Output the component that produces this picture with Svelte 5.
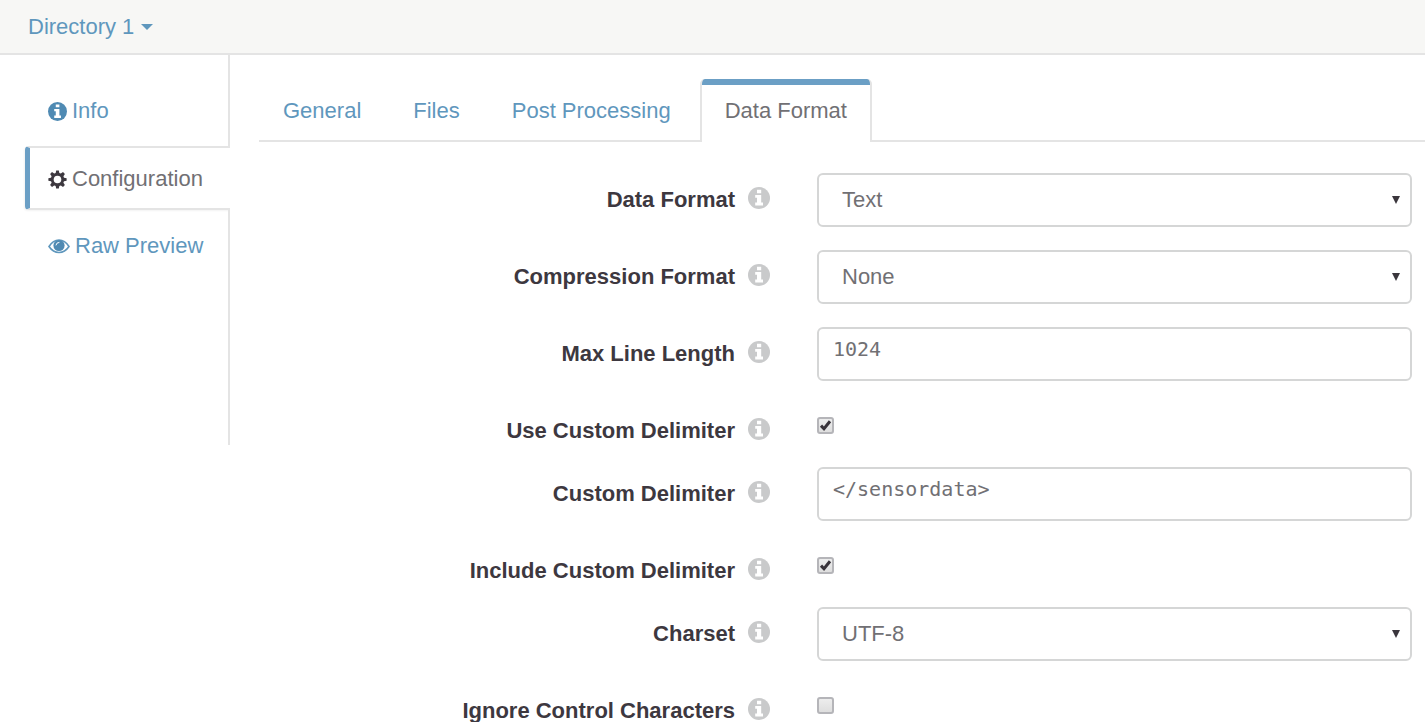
<script lang="ts">
  type Field = {
    id: string;
    label: string;
    kind: 'select' | 'text' | 'check';
    value?: string;
    options?: string[];
    checked?: boolean;
  };

  const tabs = ['General', 'Files', 'Post Processing', 'Data Format'];
  let activeTab = $state('Data Format');

  let fields = $state<Field[]>([
    { id: 'data-format', label: 'Data Format', kind: 'select', value: 'Text', options: ['Text'] },
    { id: 'compression', label: 'Compression Format', kind: 'select', value: 'None', options: ['None'] },
    { id: 'max-line', label: 'Max Line Length', kind: 'text', value: '1024' },
    { id: 'use-delimiter', label: 'Use Custom Delimiter', kind: 'check', checked: true },
    { id: 'delimiter', label: 'Custom Delimiter', kind: 'text', value: '</sensordata>' },
    { id: 'include-delimiter', label: 'Include Custom Delimiter', kind: 'check', checked: true },
    { id: 'charset', label: 'Charset', kind: 'select', value: 'UTF-8', options: ['UTF-8'] },
    { id: 'ignore-control', label: 'Ignore Control Characters', kind: 'check', checked: false }
  ]);
</script>

{#snippet infoIcon()}
  <svg class="info" viewBox="0 0 22 22" aria-hidden="true">
    <circle cx="11" cy="11" r="11" fill="currentColor" />
    <path d="M9 2.800h4.200v3.400H9zM7.200 8h6v7.600H15v2.800H7.200v-2.800H9v-4.800H7.200z" fill="#fff" />
  </svg>
{/snippet}

<div class="app">
  <header>
    <button class="crumb" type="button">
      Directory 1
      <svg width="12" height="6" viewBox="0 0 12 6" aria-hidden="true"><path d="M0 0h12L6 6z" fill="currentColor" /></svg>
    </button>
  </header>

  <div class="body">
    <nav class="side">
      <a href="#info">{@render infoIcon()}Info</a>
      <a href="#configuration" class="active">
        <svg class="gear" viewBox="0 0 20 20" aria-hidden="true">
          <g fill="currentColor">
            {#each [0, 45, 90, 135] as angle}
              <path d="M8.600 .4h2.800l.8 4v11.200l-.8 4H8.600l-.8-4V4.400z" transform="rotate({angle} 10 10)" />
            {/each}
            <circle cx="10" cy="10" r="7" />
          </g>
          <circle cx="10" cy="10" r="4" fill="#fff" />
        </svg>Configuration
      </a>
      <a href="#preview">
        <svg class="eye" viewBox="0 0 22 16" aria-hidden="true">
          <path d="M1 8.500C3.500 4.500 7 2 11 2s7.500 2.500 10 6.500C18.500 12.200 15 14.500 11 14.500S3.500 12.200 1 8.500z" fill="#fff" stroke="currentColor" stroke-width="1.600" />
          <circle cx="11" cy="7.500" r="5.600" fill="#4f8ab3" />
          <path d="M8 7a3 3 0 0 1 3-2.600" fill="none" stroke="#fff" stroke-width="1" stroke-linecap="round" />
        </svg>Raw Preview
      </a>
    </nav>

    <main>
      <div class="tabs" role="tablist">
        {#each tabs as tab}
          <button type="button" role="tab" class:active={tab === activeTab} aria-selected={tab === activeTab} onclick={() => (activeTab = tab)}>{tab}</button>
        {/each}
      </div>

      <form>
        {#each fields as field (field.id)}
          <div class="row">
            <div class="name">
              <label for={field.id}>{field.label}</label>
              {@render infoIcon()}
            </div>
            {#if field.kind === 'select'}
              <div class="select">
                <select id={field.id} bind:value={field.value}>
                  {#each field.options ?? [] as option}
                    <option>{option}</option>
                  {/each}
                </select>
                <svg width="8" height="8" viewBox="0 0 8 8" aria-hidden="true"><path d="M0 0h8L4 8z" fill="#3a363c" /></svg>
              </div>
            {:else if field.kind === 'text'}
              <input class="text" id={field.id} type="text" spellcheck="false" bind:value={field.value} />
            {:else}
              <div class="check">
                <input id={field.id} type="checkbox" bind:checked={field.checked} />
                <svg viewBox="0 0 17 17" aria-hidden="true"><path d="M4 8.600l3 3.200 6-7.600" fill="none" stroke="#38333a" stroke-width="3" /></svg>
              </div>
            {/if}
          </div>
        {/each}
      </form>
    </main>
  </div>
</div>

<style>
  :global(body) {
    background: #fff;
    overflow-x: hidden;
  }
  .app,
  .app button,
  .app select {
    font-family: 'Liberation Sans', Arial, sans-serif;
    font-size: 22px;
    line-height: 26px;
  }
  .app {
    color: #717074;
    height: 100vh;
    overflow: hidden;
  }
  .app * {
    box-sizing: border-box;
  }
  svg {
    flex: none;
    display: block;
  }
  button {
    border: 0;
    background: none;
    padding: 0;
    color: #5f97bd;
    cursor: pointer;
  }
  header {
    background: #f7f7f5;
    border-bottom: 2px solid #e4e4e4;
    padding: 14px 28px 13px;
  }
  .crumb {
    display: flex;
    align-items: center;
    gap: 7px;
  }
  .body {
    display: grid;
    grid-template-columns: 205px minmax(0, 1fr);
    column-gap: 29px;
    padding-left: 25px;
    align-items: start;
  }
  .side {
    display: flex;
    flex-direction: column;
    min-height: 390px;
  }
  .side::after {
    content: '';
    flex: 1;
    border-right: 2px solid #e4e4e4;
  }
  .side a {
    display: flex;
    align-items: center;
    gap: 5px;
    padding: 23px 0 18px 23px;
    color: #5f97bd;
    text-decoration: none;
    border-right: 2px solid #e4e4e4;
  }
  .side a:first-child {
    padding: 43px 0 22px 23px;
  }
  .side a.active {
    color: #717074;
    padding: 18px 0 16px 18px;
    border: solid #e4e4e4;
    border-width: 2px 0 2px 5px;
    border-left-color: #6b9fc5;
    border-radius: 4px 0 0 4px;
    box-shadow: -1px 1px 2px #0000000d;
  }
  .side .info {
    width: 19px;
    height: 19px;
    color: #4f8ab3;
  }
  .gear {
    width: 19px;
    height: 19px;
    color: #3d383f;
  }
  .eye {
    width: 22px;
    height: 16px;
  }
  .tabs {
    display: flex;
    margin-top: 24px;
    box-shadow: inset 0 -2px #e4e4e4;
  }
  .tabs button {
    padding: 19px 25px 18px 27px;
  }
  .tabs button:first-child {
    padding-left: 24px;
  }
  .tabs button.active {
    margin-left: 4px;
    padding: 19px 23px 18px;
    color: #717074;
    background: linear-gradient(#6b9fc5 6px, #fff 6px) border-box;
    border: solid #e4e4e4;
    border-width: 0 2px;
    border-radius: 5px 5px 0 0;
  }
  form {
    display: grid;
    row-gap: 23px;
    padding: 31px 13px 0 0;
  }
  .row {
    display: grid;
    grid-template-columns: minmax(0, 511fr) minmax(0, 595fr);
    column-gap: 47px;
    align-items: start;
  }
  .name {
    display: flex;
    justify-content: flex-end;
    align-items: flex-start;
    gap: 13px;
    padding-top: 14px;
    font-weight: bold;
    color: #3d383f;
  }
  .name .info {
    width: 22px;
    height: 22px;
    color: #c9cacb;
  }
  .select {
    display: grid;
    align-items: center;
  }
  .select > * {
    grid-area: 1 / 1;
  }
  .select svg {
    justify-self: end;
    margin-right: 12px;
    pointer-events: none;
  }
  select,
  .text {
    appearance: none;
    width: 100%;
    height: 54px;
    margin: 0;
    border: 2px solid #d5d6d6;
    border-radius: 6px;
    background: #fff;
    color: #717074;
  }
  select {
    padding: 0 23px;
  }
  .text {
    font-family: 'DejaVu Sans Mono', monospace;
    font-size: 20px;
    line-height: 24px;
    padding: 0 14px 10px;
  }
  .check {
    display: grid;
    width: 17px;
    margin-top: 13px;
  }
  .check > * {
    grid-area: 1 / 1;
    width: 17px;
    height: 17px;
  }
  .check input {
    appearance: none;
    margin: 0;
    border: 2px solid #b5b5b9;
    border-radius: 3px;
    background: linear-gradient(#ededed, #dedede);
  }
  .check svg {
    pointer-events: none;
    visibility: hidden;
  }
  .check input:checked + svg {
    visibility: visible;
  }
</style>
